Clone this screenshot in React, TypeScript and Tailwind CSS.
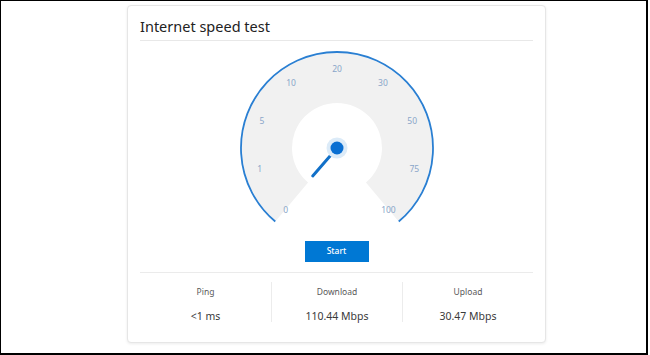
const CX = 110;
const CY = 107;

const ticks = ["0", "1", "5", "10", "20", "30", "50", "75", "100"];

const polar = (r: number, deg: number) => {
  const a = (deg * Math.PI) / 180;
  return { x: CX + r * Math.sin(a), y: CY - r * Math.cos(a) };
};

const Gauge = () => {
  const o1 = polar(95, -140);
  const o2 = polar(95, 140);
  const i1 = polar(45, -140);
  const i2 = polar(45, 140);
  const b1 = polar(96, -140);
  const b2 = polar(96, 140);
  const needle = polar(37, -139);

  return (
    <svg width="220" height="190" viewBox="0 0 220 190" className="block">
      <path
        d={`M ${o1.x} ${o1.y} A 95 95 0 1 1 ${o2.x} ${o2.y} L ${i2.x} ${i2.y} A 45 45 0 1 0 ${i1.x} ${i1.y} Z`}
        fill="#f1f1f1"
      />
      <path
        d={`M ${b1.x} ${b1.y} A 96 96 0 1 1 ${b2.x} ${b2.y}`}
        fill="none"
        stroke="#2a7fd2"
        strokeWidth="1.8"
      />
      {ticks.map((t, i) => {
        const p = polar(80, -140 + i * 35);
        return (
          <text
            key={t}
            x={p.x}
            y={p.y}
            textAnchor="middle"
            dominantBaseline="central"
            fontSize="8.5"
            fill="#8aa6c9"
            fontFamily="'Noto Sans', sans-serif"
          >
            {t}
          </text>
        );
      })}
      <line
        x1={CX}
        y1={CY}
        x2={needle.x}
        y2={needle.y}
        stroke="#1170c8"
        strokeWidth="3"
        strokeLinecap="round"
      />
      <circle cx={CX} cy={CY} r="10.5" fill="#dcebf8" />
      <circle cx={CX} cy={CY} r="6.5" fill="#0a6fd2" />
    </svg>
  );
};

const Stat = ({ label, value, first }: { label: string; value: string; first?: boolean }) => (
  <div className={`flex flex-col items-center h-[40px] pt-[4px] ${first ? "" : "border-l border-[#ececec]"}`}>
    <div className="text-[8.5px] leading-[12px] text-[#5a5a5a]">{label}</div>
    <div className="mt-[12px] text-[10.5px] leading-[12px] text-[#3a3a3a]">{value}</div>
  </div>
);

export default function App() {
  return (
    <div
      className="w-[648px] h-[355px] bg-white border-t border-l border-r-2 border-b-2 border-black"
      style={{ fontFamily: "'Noto Sans', 'Open Sans', sans-serif" }}
    >
      <div className="ml-[126px] mt-[4px] w-[419px] h-[338px] bg-white border border-[#e6e6e6] rounded-[4px] shadow-[0_1px_3px_rgba(0,0,0,0.08)] flex flex-col">
        <div className="mx-3 pt-[8px] pb-[2px] border-b border-[#e8e8e8]">
          <h1 className="text-[14.5px] leading-[24px] text-[#222] font-normal">Internet speed test</h1>
        </div>
        <div className="flex justify-center">
          <Gauge />
        </div>
        <div className="flex justify-center mt-[10px]">
          <button className="w-[64px] h-[21px] bg-[#0078d4] text-white text-[8.5px] font-medium">
            Start
          </button>
        </div>
        <div className="mx-3 mt-[10px] border-t border-[#ebebeb] pt-[9px] grid grid-cols-3">
          <Stat label="Ping" value="<1 ms" first />
          <Stat label="Download" value="110.44 Mbps" />
          <Stat label="Upload" value="30.47 Mbps" />
        </div>
      </div>
    </div>
  );
}
